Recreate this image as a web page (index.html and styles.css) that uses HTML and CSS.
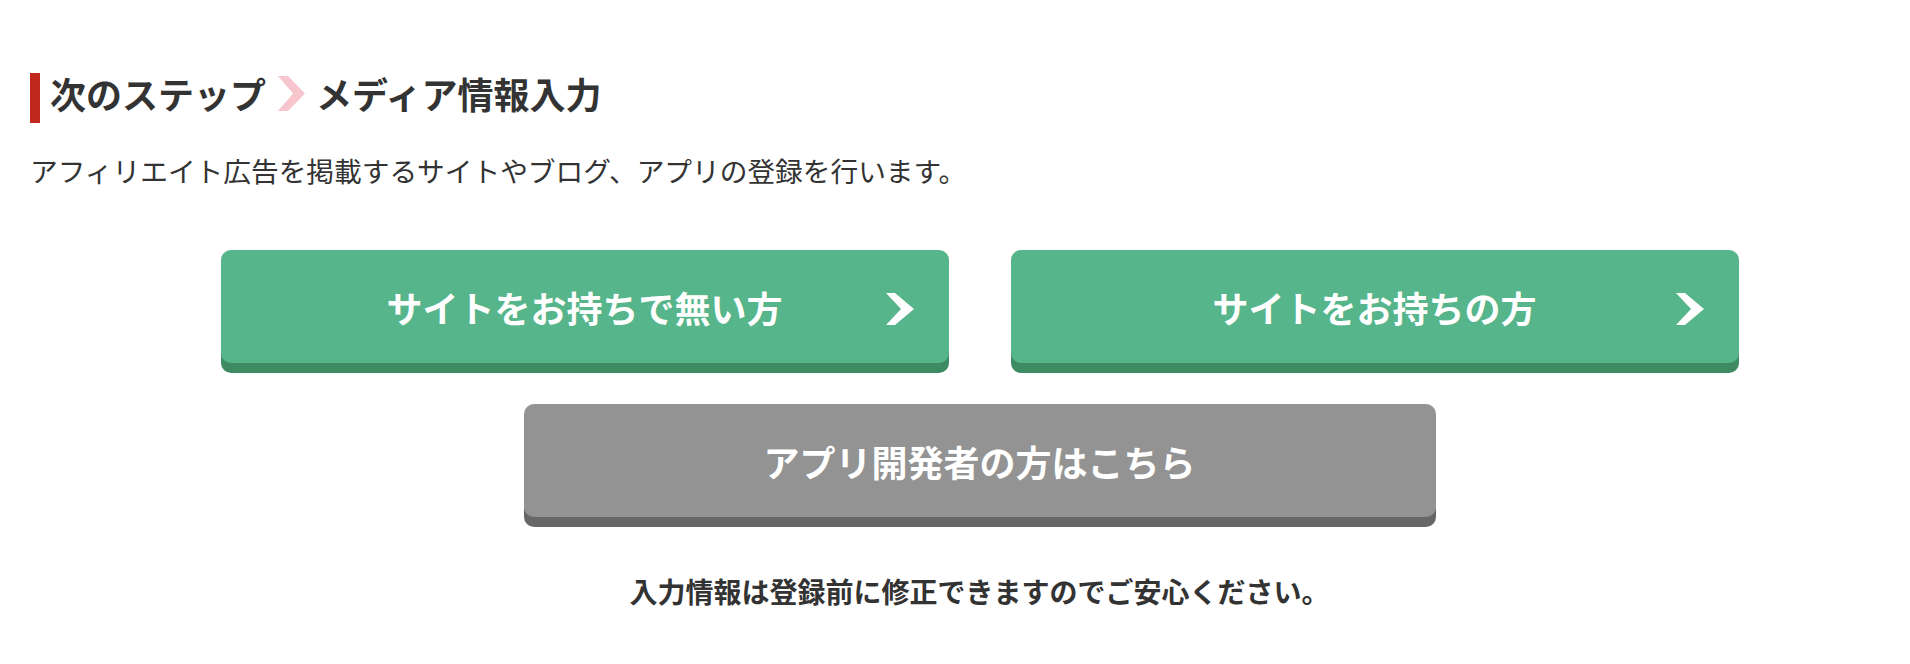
FILE: index.html
```html
<!DOCTYPE html>
<html lang="ja">
<head>
    <meta charset="UTF-8">
    <meta name="viewport" content="width=device-width, initial-scale=1.0">
    <title>次のステップ メディア情報入力</title>
    <link rel="stylesheet" href="styles.css">
</head>
<body>
    <div class="page">
        <h2 class="step-title">
            <span>次のステップ</span>
            <svg class="step-arrow" viewBox="0 0 27 35" aria-hidden="true">
                <polygon points="0,0 10,0 27,17.5 10,35 0,35 15,17.5" />
            </svg>
            <span>メディア情報入力</span>
        </h2>
        <p class="lead">アフィリエイト広告を掲載するサイトやブログ、アプリの登録を行います。</p>

        <div class="actions">
            <div class="action-row">
                <a class="btn btn-green" href="#">
                    サイトをお持ちで無い方
                    <svg class="btn-arrow" viewBox="0 0 28 32" aria-hidden="true">
                        <polygon points="0,0 9,0 28,16 9,32 0,32 15,16" />
                    </svg>
                </a>
                <a class="btn btn-green" href="#">
                    サイトをお持ちの方
                    <svg class="btn-arrow" viewBox="0 0 28 32" aria-hidden="true">
                        <polygon points="0,0 9,0 28,16 9,32 0,32 15,16" />
                    </svg>
                </a>
            </div>
            <div class="action-row">
                <a class="btn btn-gray" href="#">アプリ開発者の方はこちら</a>
            </div>
            <p class="note">入力情報は登録前に修正できますのでご安心ください。</p>
        </div>
    </div>
</body>
</html>
```

FILE: styles.css
```css
body {
    margin: 0;
    background-color: #fff;
    color: #333;
    font-family: "Noto Sans CJK JP", "Noto Sans", sans-serif;
}

.page {
    padding: 73px 0 40px 30px;
}

.step-title {
    display: flex;
    align-items: center;
    margin: 0;
    height: 41px;
    padding: 0 0 9px 10px;
    border-left: 10px solid #c0281e;
    font-size: 36px;
    font-weight: bold;
    line-height: 41px;
    color: #333;
}

.step-arrow {
    width: 27px;
    height: 35px;
    margin: 0 11px 0 12px;
    fill: #f6c6cc;
}

.lead {
    margin: 27px 0 0;
    font-size: 27.7px;
    line-height: 40px;
}

.actions {
    display: flex;
    flex-direction: column;
    align-items: center;
    padding-left: 19px;
    margin-top: 60px;
}

.action-row {
    display: flex;
    gap: 62px;
    margin-bottom: 41px;
}

.btn {
    position: relative;
    display: flex;
    justify-content: center;
    align-items: center;
    height: 113px;
    border-radius: 10px;
    color: #fff;
    font-size: 36px;
    font-weight: bold;
    text-decoration: none;
}

.btn-green {
    width: 728px;
    background-color: #56b58a;
    box-shadow: 0 10px 0 #3e8a62;
}

.btn-gray {
    width: 912px;
    background-color: #939393;
    box-shadow: 0 10px 0 #676767;
}

.btn-arrow {
    position: absolute;
    right: 35px;
    top: 43px;
    width: 28px;
    height: 32px;
    fill: #fff;
}

.note {
    margin: 13px 0 0;
    font-size: 28px;
    font-weight: bold;
    line-height: 40px;
}
```
